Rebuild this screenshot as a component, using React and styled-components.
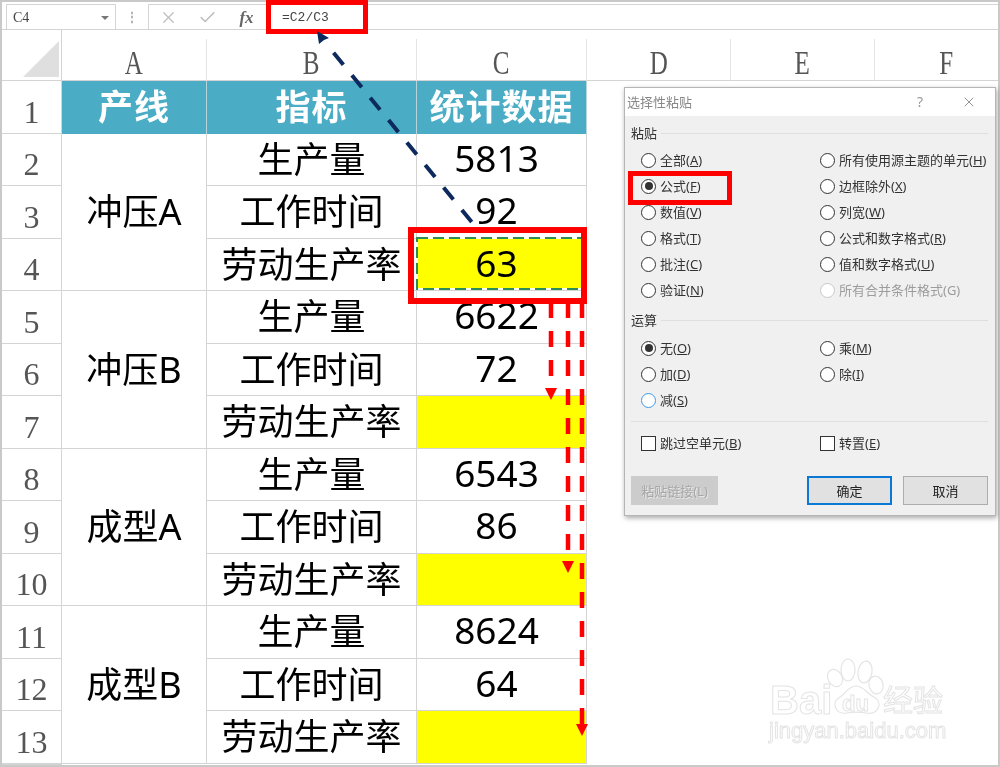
import styled, { createGlobalStyle } from 'styled-components'
import { X, Check } from 'lucide-react'

const GlobalStyle = createGlobalStyle`
  html, body {
    margin: 0;
    padding: 0;
    background: #ffffff;
    overflow: hidden;
  }
`

const SANS = '"Noto Sans", "Noto Sans CJK SC", sans-serif'
const LINE = '#d4d4d4'

const Frame = styled.div`
  position: relative;
  box-sizing: border-box;
  width: 1000px;
  height: 767px;
  padding: 2px;
  background: #c9c9c9;
  overflow: hidden;
  filter: blur(0.35px);
`
const Window = styled.div`
  display: flex;
  flex-direction: column;
  height: 100%;
  background: #ffffff;
  overflow: hidden;
`

const FormulaBar = styled.div`
  display: flex;
  align-items: center;
  flex: none;
  box-sizing: border-box;
  height: 28px;
  padding: 2px 0 0 4px;
  border-bottom: 1px solid ${LINE};
`
const NameBox = styled.div`
  display: flex;
  align-items: center;
  justify-content: space-between;
  box-sizing: border-box;
  width: 110px;
  height: 26px;
  padding: 2px 6px 0;
  border: 1px solid ${LINE};
  font: 14px "Liberation Serif", serif;
  color: #444;
`
const Caret = styled.span`
  width: 0;
  height: 0;
  border-left: 4px solid transparent;
  border-right: 4px solid transparent;
  border-top: 4px solid #777;
`
const Dots = styled.span`
  width: 32px;
  text-align: center;
  font: bold 12px ${SANS};
  color: #aaa;
`
const FormulaBox = styled.div`
  display: flex;
  align-items: center;
  flex: 1;
  box-sizing: border-box;
  height: 26px;
  padding-top: 2px;
  border: 1px solid ${LINE};
  border-right: none;
`
const ToolIcon = styled.span`
  display: flex;
  justify-content: center;
  width: 39px;
  color: #bdbdbd;
`
const Fx = styled(ToolIcon)`
  font: italic bold 17px "Liberation Serif", serif;
  color: #666;
`
const FormulaText = styled.span`
  margin-left: 16px;
  font: 13px "Liberation Mono", monospace;
  color: #444;
`

const Sheet = styled.div`
  display: grid;
  flex: 1;
  grid-template-columns: 60px 145px 210px 170px 144px 144px 144px;
  grid-template-rows: 51px repeat(13, 52.5px) 1fr;
`
const Corner = styled.div`
  display: flex;
  align-items: flex-end;
  justify-content: flex-end;
  padding: 0 2px 3px 0;
  border-right: 1px solid ${LINE};
  border-bottom: 1px solid ${LINE};
`
const ColHead = styled.div`
  display: flex;
  align-items: flex-end;
  justify-content: center;
  padding-bottom: 1px;
  margin-top: 9px;
  border-right: 1px solid #e4e4e4;
  border-bottom: 1px solid ${LINE};
  font: 33px/32px "Liberation Serif", serif;
  color: #555;
  span {
    display: inline-block;
    transform: scaleX(0.76);
  }
`
const RowHead = styled.div`
  grid-column: 1;
  display: flex;
  align-items: flex-end;
  justify-content: center;
  border-right: 1px solid ${LINE};
  border-bottom: 1px solid ${LINE};
  font: 32px/41px "Liberation Serif", serif;
  color: #555;
`
const HeaderCell = styled.div`
  grid-column: ${(p) => p.$col};
  display: flex;
  align-items: center;
  justify-content: center;
  box-sizing: border-box;
  padding-bottom: 6px;
  background: #4bacc6;
  border-right: 1px solid #b9d3da;
  font: bold 35px ${SANS};
  letter-spacing: 1px;
  color: #ffffff;
`
const Cell = styled.div`
  grid-column: ${(p) => p.$col};
  grid-row: span ${(p) => p.$span || 1};
  display: flex;
  align-items: center;
  justify-content: center;
  box-sizing: border-box;
  padding: 0 ${(p) => (p.$value ? '10px' : '0')} 4px 0;
  background: ${(p) => (p.$fill ? '#ffff00' : '#ffffff')};
  border-right: 1px solid ${LINE};
  border-bottom: 1px solid ${LINE};
  font: ${(p) => (p.$value ? '37px' : '36px')} ${SANS};
  color: #000000;
`

// red boxes drawn over the sheet
const Highlight = styled.div`
  position: absolute;
  box-sizing: border-box;
  left: ${(p) => p.$x}px;
  top: ${(p) => p.$y}px;
  width: ${(p) => p.$w}px;
  height: ${(p) => p.$h}px;
  border: ${(p) => p.$b}px solid #ff0000;
`
const Overlay = styled.svg`
  position: absolute;
  left: 0;
  top: 0;
  pointer-events: none;
`

const Dialog = styled.div`
  position: absolute;
  left: 624px;
  top: 87px;
  box-sizing: border-box;
  width: 372px;
  height: 429px;
  background: #f0f0f0;
  border: 1px solid #b5b5b5;
  box-shadow: 1px 2px 5px rgba(0, 0, 0, 0.35);
  font: 13px/16px ${SANS};
  color: #333;
`
const TitleBar = styled.div`
  display: flex;
  align-items: center;
  box-sizing: border-box;
  height: 28px;
  padding: 0 18px 0 2px;
  background: #ffffff;
  color: #888;
`
const TitleText = styled.span`
  flex: 1;
`
const Help = styled.span`
  margin-right: 38px;
  font-size: 14px;
  color: #999;
`
const DialogBody = styled.div`
  padding: 8px 7px 0 6px;
`
const Legend = styled.div`
  display: flex;
  align-items: center;
  gap: 4px;
  height: 18px;
  &::after {
    content: '';
    flex: 1;
    height: 1px;
    background: #dfdfdf;
  }
`
const Options = styled.div`
  display: grid;
  grid-template-columns: 179px 1fr;
  grid-auto-rows: 26px;
  margin: ${(p) => p.$top}px 0 8px;
  padding-left: 10px;
`
const Option = styled.div`
  display: flex;
  align-items: center;
  gap: 4px;
  grid-column: ${(p) => p.$col || 'auto'};
  grid-row: ${(p) => p.$row || 'auto'};
  color: ${(p) => (p.$off ? '#9c9c9c' : '#333')};
`
const Radio = styled.span`
  position: relative;
  flex: none;
  box-sizing: border-box;
  width: 15px;
  height: 15px;
  border-radius: 50%;
  background: #ffffff;
  border: 1px solid ${(p) => (p.$focus ? '#3d9be9' : p.$off ? '#c8c8c8' : '#333')};
  &::after {
    content: '';
    display: ${(p) => (p.$on ? 'block' : 'none')};
    position: absolute;
    inset: 2.5px;
    border-radius: 50%;
    background: #333;
  }
`
const Divider = styled.div`
  height: 1px;
  background: #dfdfdf;
`
const CheckBox = styled.span`
  flex: none;
  box-sizing: border-box;
  width: 15px;
  height: 15px;
  background: #ffffff;
  border: 1px solid #333;
`
const Footer = styled.div`
  display: flex;
  gap: 11px;
  margin-top: 20px;
`
const Button = styled.div`
  display: flex;
  align-items: center;
  justify-content: center;
  box-sizing: border-box;
  width: 85px;
  height: 29px;
  background: #e1e1e1;
  border: ${(p) => (p.$primary ? '2px solid #0a78d4' : '1px solid #adadad')};
  color: #222;
`
const LinkButton = styled(Button)`
  width: 87px;
  margin-right: auto;
  background: #cccccc;
  border-color: #cccccc;
  color: #a6a6a6;
  text-shadow: 1px 1px 0 #e8e8e8;
`

const Watermark = styled.div`
  position: absolute;
  left: 768px;
  top: 658px;
  width: 190px;
  height: 90px;
  color: #ffffff;
  -webkit-text-stroke: 1px #e4e4e4;
  font-family: "Liberation Sans", "Noto Sans CJK SC", sans-serif;
`
const Paw = styled.svg`
  position: absolute;
  left: 55px;
  top: 0;
`
const Mark = styled.span`
  position: absolute;
  left: ${(p) => p.$x}px;
  top: ${(p) => p.$y}px;
  font-size: ${(p) => p.$size}px;
  font-weight: ${(p) => (p.$bold ? 'bold' : 'normal')};
  line-height: 1;
  white-space: nowrap;
`

const GROUPS = [
  { name: '冲压A', start: 2, values: ['5813', '92', '63'] },
  { name: '冲压B', start: 5, values: ['6622', '72', ''] },
  { name: '成型A', start: 8, values: ['6543', '86', ''] },
  { name: '成型B', start: 11, values: ['8624', '64', ''] },
]
const METRICS = ['生产量', '工作时间', '劳动生产率']
const COLUMNS = ['A', 'B', 'C', 'D', 'E', 'F']

const PASTE_LEFT = [
  ['全部', 'A'],
  ['公式', 'F', true],
  ['数值', 'V'],
  ['格式', 'T'],
  ['批注', 'C'],
  ['验证', 'N'],
]
const PASTE_RIGHT = [
  ['所有使用源主题的单元', 'H'],
  ['边框除外', 'X'],
  ['列宽', 'W'],
  ['公式和数字格式', 'R'],
  ['值和数字格式', 'U'],
]

function Label({ text, letter }) {
  return (
    <span>
      {text}(<u>{letter}</u>)
    </span>
  )
}

function RedArrow({ x, to, size }) {
  return (
    <>
      <line x1={x} y1={302} x2={x} y2={to} stroke="#ff0000" strokeWidth="4.5" strokeDasharray="16 13" />
      <polygon points={`${x - size},${to} ${x + size},${to} ${x},${to + 12}`} fill="#ff0000" />
    </>
  )
}

function SheetBody() {
  return GROUPS.map((group) =>
    METRICS.map((metric, i) => {
      const row = group.start + i
      return [
        <RowHead key={`r${row}`}>{row}</RowHead>,
        i === 0 && (
          <Cell key={`g${row}`} $col={2} $span={3}>
            {group.name}
          </Cell>
        ),
        <Cell key={`m${row}`} $col={3}>
          {metric}
        </Cell>,
        <Cell key={`v${row}`} $col={4} $value $fill={i === 2}>
          {group.values[i]}
        </Cell>,
      ]
    })
  )
}

export default function App() {
  return (
    <>
      <GlobalStyle />
      <Frame>
        <Window>
          <FormulaBar>
            <NameBox>
              C4
              <Caret />
            </NameBox>
            <Dots>⋮</Dots>
            <FormulaBox>
              <ToolIcon>
                <X size={19} strokeWidth={1.5} />
              </ToolIcon>
              <ToolIcon>
                <Check size={19} strokeWidth={2} />
              </ToolIcon>
              <Fx>fx</Fx>
              <FormulaText>=C2/C3</FormulaText>
            </FormulaBox>
          </FormulaBar>
          <Sheet>
            <Corner>
              <svg width="36" height="36" viewBox="0 0 36 36">
                <polygon points="36,0 36,36 0,36" fill="#dfdfdf" />
              </svg>
            </Corner>
            {COLUMNS.map((c) => (
              <ColHead key={c}>
                <span>{c}</span>
              </ColHead>
            ))}
            <RowHead>1</RowHead>
            <HeaderCell $col={2}>产线</HeaderCell>
            <HeaderCell $col={3}>指标</HeaderCell>
            <HeaderCell $col={4}>统计数据</HeaderCell>
            <SheetBody />
            <RowHead />
          </Sheet>
        </Window>

        {/* copy marquee round C4, its right edge stays under the red box */}
        <Overlay width="1000" height="767">
          <rect x="417" y="238" width="167" height="51" fill="none" stroke="#ffffff" strokeWidth="2" />
          <rect x="417" y="238" width="167" height="51" fill="none" stroke="#2e8b57" strokeWidth="2" strokeDasharray="11 5" />
        </Overlay>

        <Highlight $x={266} $y={0} $w={102} $h={34} $b={5} />
        <Highlight $x={408} $y={227} $w={179} $h={77} $b={6} />

        <Overlay width="1000" height="767">
          <line x1="471.7" y1="222" x2="333" y2="52" stroke="#0d2a5e" strokeWidth="4" strokeDasharray="15.5 13.5" />
          <polygon points="317,31 329,38 324,40 319,44" fill="#0d2a5e" />
          <RedArrow x={551} to={388} size={6} />
          <RedArrow x={568} to={561} size={6} />
          <RedArrow x={582} to={724} size={6} />
        </Overlay>

        <Dialog>
          <TitleBar>
            <TitleText>选择性粘贴</TitleText>
            <Help>?</Help>
            <X size={16} strokeWidth={1.2} color="#777" />
          </TitleBar>
          <DialogBody>
            <Legend>粘贴</Legend>
            <Options $top={5}>
              {PASTE_LEFT.map(([text, letter, on], i) => (
                <Option key={letter} $col={1} $row={i + 1}>
                  <Radio $on={on} />
                  <Label text={text} letter={letter} />
                </Option>
              ))}
              {PASTE_RIGHT.map(([text, letter], i) => (
                <Option key={letter} $col={2} $row={i + 1}>
                  <Radio />
                  <Label text={text} letter={letter} />
                </Option>
              ))}
              <Option $col={2} $row={6} $off>
                <Radio $off />
                所有合并条件格式(G)
              </Option>
            </Options>
            <Legend>运算</Legend>
            <Options $top={6}>
              <Option>
                <Radio $on />
                <Label text="无" letter="O" />
              </Option>
              <Option>
                <Radio />
                <Label text="乘" letter="M" />
              </Option>
              <Option>
                <Radio />
                <Label text="加" letter="D" />
              </Option>
              <Option>
                <Radio />
                <Label text="除" letter="I" />
              </Option>
              <Option>
                <Radio $focus />
                <Label text="减" letter="S" />
              </Option>
            </Options>
            <Divider />
            <Options $top={8}>
              <Option>
                <CheckBox />
                <Label text="跳过空单元" letter="B" />
              </Option>
              <Option>
                <CheckBox />
                <Label text="转置" letter="E" />
              </Option>
            </Options>
            <Footer>
              <LinkButton>粘贴链接(L)</LinkButton>
              <Button $primary>确定</Button>
              <Button>取消</Button>
            </Footer>
          </DialogBody>
          <Highlight $x={3} $y={83} $w={104} $h={34} $b={5} />
        </Dialog>

        <Watermark>
          <Paw width="80" height="60" viewBox="0 0 80 60" fill="#ffffff" stroke="#e4e4e4" strokeWidth="1.2">
            <ellipse cx="12" cy="20" rx="7" ry="9" transform="rotate(-30 12 20)" />
            <ellipse cx="25" cy="12" rx="7" ry="11" />
            <ellipse cx="42" cy="14" rx="7" ry="11" transform="rotate(10 42 14)" />
            <ellipse cx="53" cy="27" rx="7" ry="9" transform="rotate(-15 53 27)" />
            <path d="M33 28 C25 28 23 36 17 39 C7 45 13 57 24 55 C30 54 37 54 43 55 C55 57 61 45 51 39 C44 36 41 28 33 28 Z" />
          </Paw>
          <Mark $x={2} $y={22} $size={40} $bold>Bai</Mark>
          <Mark $x={74} $y={35} $size={22} $bold>du</Mark>
          <Mark $x={115} $y={28} $size={30}>经验</Mark>
          <Mark $x={1} $y={62} $size={22}>jingyan.baidu.com</Mark>
        </Watermark>
      </Frame>
    </>
  )
}
